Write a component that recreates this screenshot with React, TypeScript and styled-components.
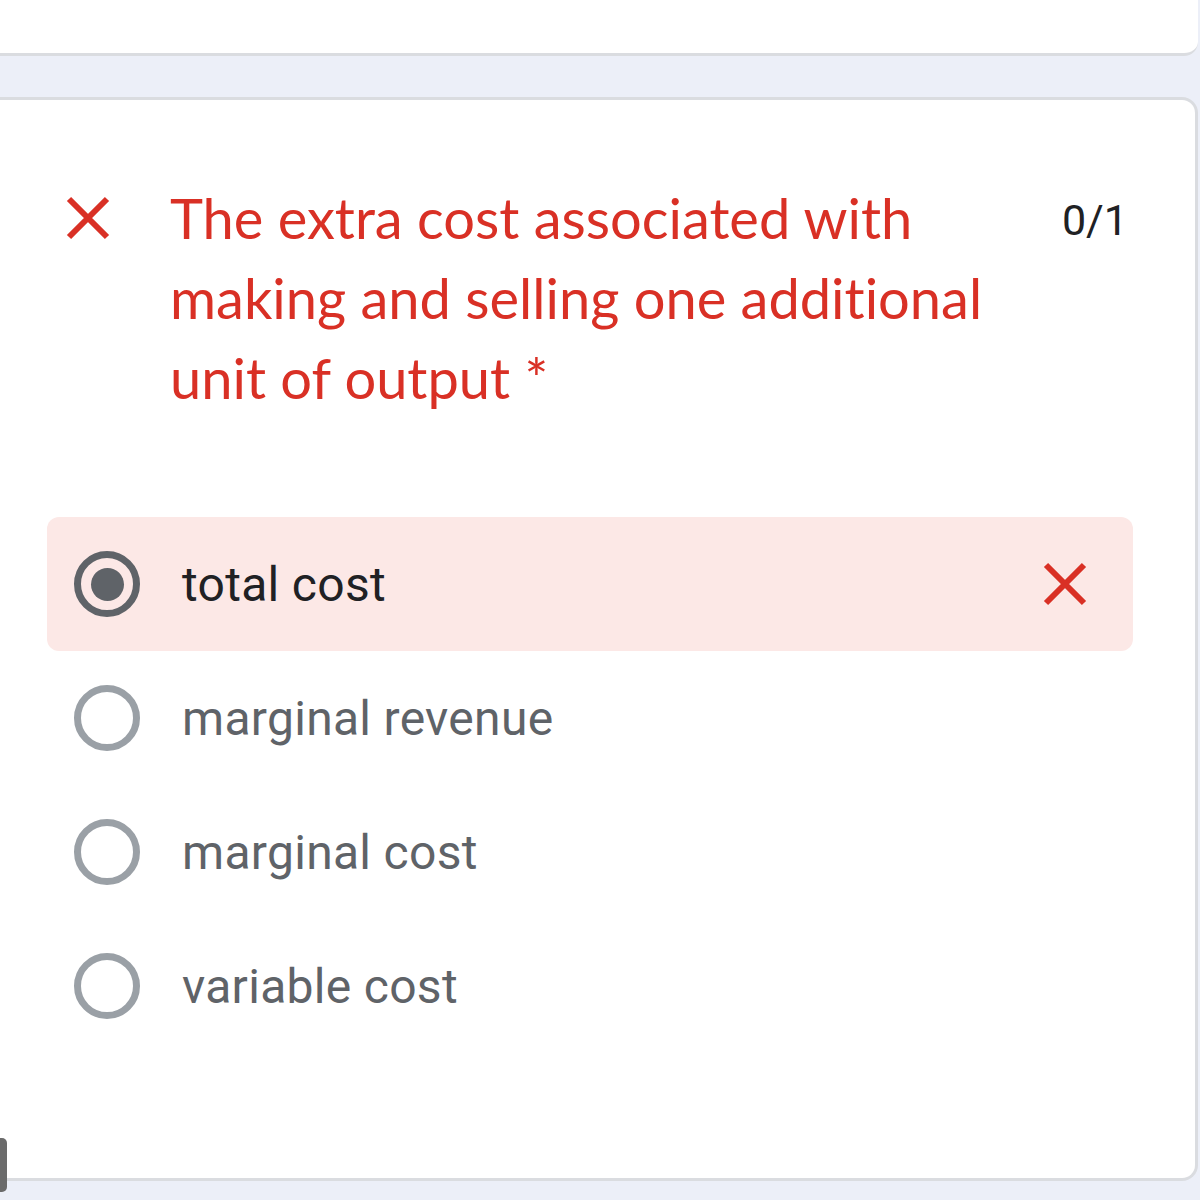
import React from 'react';
import styled, { createGlobalStyle } from 'styled-components';

const GlobalStyle = createGlobalStyle`
  html, body {
    margin: 0;
    padding: 0;
    background: #eceff8;
    overflow: hidden;
  }
`;

type Option = { label: string; selected?: boolean; wrong?: boolean };

const options: Option[] = [
  { label: 'total cost', selected: true, wrong: true },
  { label: 'marginal revenue' },
  { label: 'marginal cost' },
  { label: 'variable cost' },
];

const CrossIcon = ({ size }: { size: number }) => (
  <svg width={size} height={size} viewBox="0 0 46 46">
    <path d="M4 4 L42 42 M42 4 L4 42" stroke="#d93025" strokeWidth="6" strokeLinecap="butt" fill="none" />
  </svg>
);

const App = () => {
  return (
    <>
      <GlobalStyle />
      <Page>
        <TopCard />
        <Spacer />
        <Card>
          <Header>
            <HeaderIcon>
              <CrossIcon size={46} />
            </HeaderIcon>
            <QuestionText>
              The extra cost associated with making and selling one additional unit of output *
            </QuestionText>
            <Score>0/1</Score>
          </Header>
          <OptionList>
            {options.map((o) => (
              <OptionRow key={o.label} $wrong={o.wrong}>
                <Radio $selected={o.selected} />
                <OptionLabel $selected={o.selected}>{o.label}</OptionLabel>
                {o.wrong && (
                  <RowMark>
                    <CrossIcon size={46} />
                  </RowMark>
                )}
              </OptionRow>
            ))}
          </OptionList>
        </Card>
        <Spacer />
        <ScrollThumb />
      </Page>
    </>
  );
};

const Page = styled.div`
  position: relative;
  width: 1200px;
  height: 1200px;
  display: flex;
  flex-direction: column;
`;

const TopCard = styled.div`
  height: 53px;
  background: #ffffff;
  border-bottom: 3px solid #dadce0;
  margin-right: 2px;
  border-bottom-right-radius: 14px;
  flex-shrink: 0;
`;

const Spacer = styled.div`
  height: 41px;
  flex-shrink: 0;
`;

const Card = styled.div`
  background: #ffffff;
  border: 3px solid #dadce0;
  border-left: none;
  border-radius: 0 16px 16px 0;
  margin-right: 2px;
  height: 1084px;
  box-sizing: border-box;
  padding: 78px 62px 0 47px;
  flex-shrink: 0;
`;

const Header = styled.div`
  display: flex;
  align-items: flex-start;
  margin-left: 18px;
`;

const HeaderIcon = styled.div`
  width: 46px;
  height: 80px;
  display: flex;
  align-items: center;
  flex-shrink: 0;
`;

const QuestionText = styled.div`
  margin-left: 59px;
  width: 880px;
  font-family: Lato, 'Noto Sans', sans-serif;
  font-size: 56px;
  line-height: 80px;
  color: #d93025;
  font-variant-ligatures: none;
`;

const Score = styled.div`
  margin-left: auto;
  margin-right: 5px;
  font-family: Roboto, sans-serif;
  font-size: 43px;
  line-height: 80px;
  color: #202124;
  padding-top: 2px;
`;

const OptionList = styled.div`
  margin-top: 99px;
  display: flex;
  flex-direction: column;
`;

const OptionRow = styled.div<{ $wrong?: boolean }>`
  height: 134px;
  display: flex;
  align-items: center;
  padding-left: 27px;
  padding-right: 45px;
  border-radius: 12px;
  background: ${(p) => (p.$wrong ? '#fce8e6' : 'transparent')};
`;

const Radio = styled.div<{ $selected?: boolean }>`
  width: 66px;
  height: 66px;
  box-sizing: border-box;
  border-radius: 50%;
  border: 7px solid ${(p) => (p.$selected ? '#5f6368' : '#9aa0a6')};
  display: flex;
  align-items: center;
  justify-content: center;
  flex-shrink: 0;
  &::after {
    content: '';
    display: ${(p) => (p.$selected ? 'block' : 'none')};
    width: 33px;
    height: 33px;
    border-radius: 50%;
    background: #5f6368;
  }
`;

const OptionLabel = styled.div<{ $selected?: boolean }>`
  margin-left: 42px;
  font-family: Roboto, sans-serif;
  font-size: 48px;
  color: ${(p) => (p.$selected ? '#202124' : '#5f6368')};
  letter-spacing: 0.3px;
`;

const RowMark = styled.div`
  margin-left: auto;
  display: flex;
  align-items: center;
`;

const ScrollThumb = styled.div`
  position: absolute;
  left: -6px;
  top: 1138px;
  width: 13px;
  height: 54px;
  border-radius: 5px;
  background: #6b6b6b;
`;

export default App;
